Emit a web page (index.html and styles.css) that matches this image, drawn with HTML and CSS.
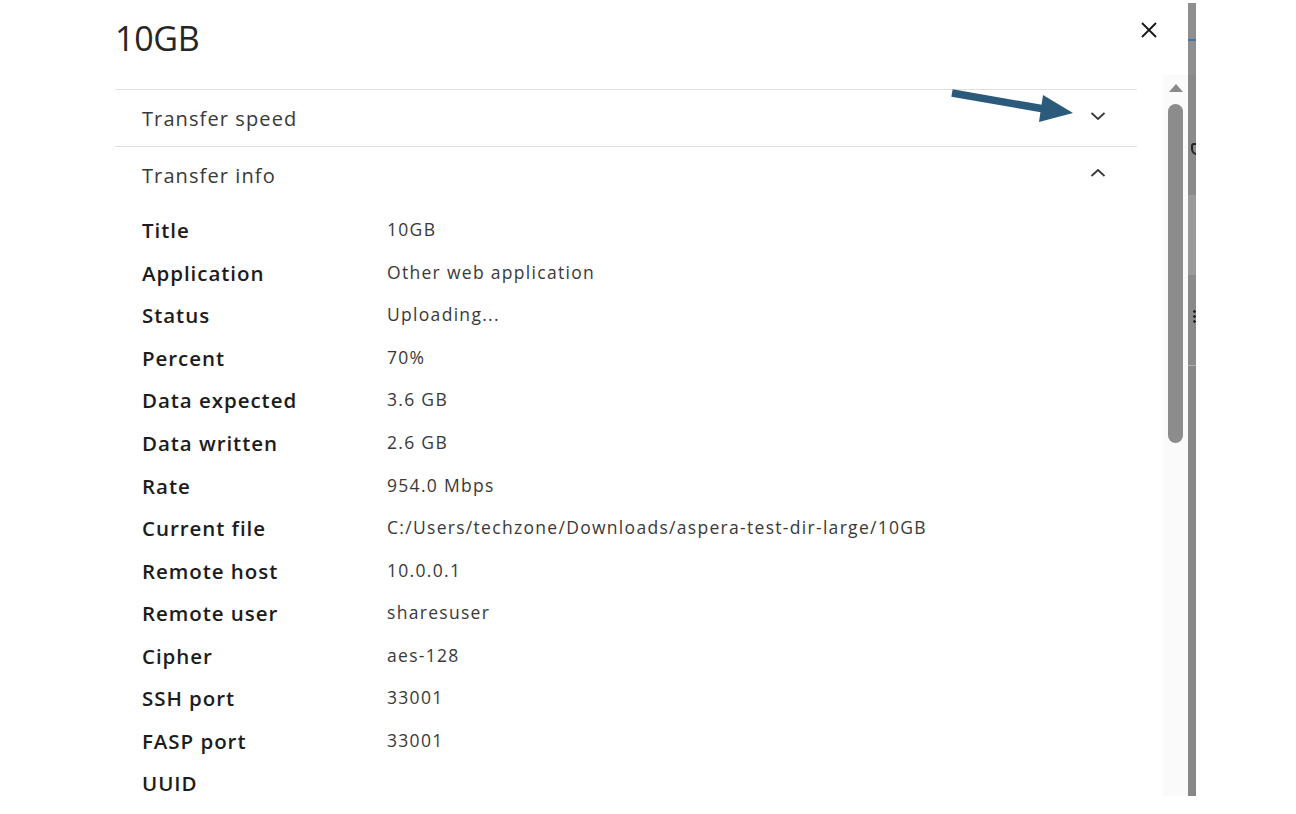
FILE: index.html
```html
<!DOCTYPE html>
<html lang="en">
<head>
<meta charset="utf-8">
<title>10GB transfer</title>
<link rel="stylesheet" href="styles.css">
</head>
<body>
<div class="page">
  <div class="modal">
    <header class="modal-header">
      <h1 class="modal-title">10GB</h1>
      <button class="close-btn" aria-label="Close">
        <svg width="18" height="18" viewBox="0 0 18 18"><path d="M2 2 L16 16 M16 2 L2 16" stroke="#161616" stroke-width="1.8" fill="none"/></svg>
      </button>
    </header>
    <div class="modal-body">
      <div class="content">
        <section class="acc-item">
          <div class="acc-head">
            <span class="acc-title">Transfer speed</span>
            <svg class="chev" width="16" height="10" viewBox="0 0 16 10"><path d="M1.5 2 L8 8 L14.5 2" stroke="#393939" stroke-width="1.8" fill="none"/></svg>
          </div>
        </section>
        <section class="acc-item open">
          <div class="acc-head">
            <span class="acc-title">Transfer info</span>
            <svg class="chev" width="16" height="10" viewBox="0 0 16 10"><path d="M1.5 8 L8 2 L14.5 8" stroke="#393939" stroke-width="1.8" fill="none"/></svg>
          </div>
          <dl class="info">
            <dt>Title</dt><dd>10GB</dd>
            <dt>Application</dt><dd>Other web application</dd>
            <dt>Status</dt><dd>Uploading...</dd>
            <dt>Percent</dt><dd>70%</dd>
            <dt>Data expected</dt><dd>3.6 GB</dd>
            <dt>Data written</dt><dd>2.6 GB</dd>
            <dt>Rate</dt><dd>954.0 Mbps</dd>
            <dt>Current file</dt><dd>C:/Users/techzone/Downloads/aspera-test-dir-large/10GB</dd>
            <dt>Remote host</dt><dd>10.0.0.1</dd>
            <dt>Remote user</dt><dd>sharesuser</dd>
            <dt>Cipher</dt><dd>aes-128</dd>
            <dt>SSH port</dt><dd>33001</dd>
            <dt>FASP port</dt><dd>33001</dd>
            <dt>UUID</dt><dd></dd>
          </dl>
        </section>
      </div>
      <div class="scrollbar">
        <div class="scroll-up"></div>
        <div class="scroll-thumb"></div>
      </div>
    </div>
  </div>
  <div class="bg-strip">
    <div class="strip-seg s1"></div>
    <div class="strip-blue"></div>
    <div class="strip-seg s2"></div>
    <div class="strip-seg s3"><span class="strip-mark"></span></div>
    <div class="strip-seg s4"></div>
    <div class="strip-seg s5"><span class="strip-dots"></span></div>
    <div class="strip-seg s6"></div>
  </div>
</div>
<svg class="annotation" width="140" height="50" viewBox="0 0 140 50">
  <path d="M2 9 L100 26" stroke="#2c5a7b" stroke-width="7.5" fill="none"/>
  <polygon points="93,11 123,29 89,38" fill="#2c5a7b"/>
</svg>
</body>
</html>
```

FILE: styles.css
```css
html, body {
  margin: 0;
  padding: 0;
  background: #ffffff;
}

body {
  font-family: "Open Sans", "Noto Sans", "Liberation Sans", sans-serif;
  color: #161616;
  position: relative;
  width: 1296px;
  height: 814px;
  overflow: hidden;
}

.page {
  display: flex;
  align-items: flex-start;
  height: 796px;
}

.modal {
  width: 1188px;
  height: 796px;
  background: #ffffff;
  display: flex;
  flex-direction: column;
}

.modal-header {
  height: 75px;
  display: flex;
  justify-content: space-between;
  align-items: flex-start;
  padding-left: 115px;
  padding-right: 30px;
}

.modal-title {
  margin: 18px 0 0 0;
  font-size: 34px;
  line-height: 40px;
  font-weight: 400;
  color: #262626;
  letter-spacing: -0.3px;
}

.close-btn {
  margin-top: 21px;
  width: 18px;
  height: 18px;
  padding: 0;
  border: 0;
  background: none;
  display: block;
}

.close-btn svg {
  display: block;
}

.modal-body {
  flex: 1;
  display: flex;
  min-height: 0;
}

.content {
  margin-left: 115px;
  width: 1022px;
  padding-top: 14px;
}

.acc-item {
  border-top: 1px solid #e0e0e0;
}

.acc-head {
  height: 56px;
  display: flex;
  align-items: center;
  justify-content: space-between;
  padding-left: 27px;
  padding-right: 31px;
}

.acc-title {
  font-size: 20px;
  color: #393939;
  letter-spacing: 1.1px;
}

.chev {
  display: block;
  position: relative;
  top: -2px;
}

.info {
  margin: 6px 0 0 0;
  padding-left: 27px;
  display: grid;
  grid-template-columns: 245px 1fr;
  grid-auto-rows: 42.55px;
  align-items: center;
}

.info dt {
  font-size: 20.5px;
  font-weight: 600;
  color: #1c1c1c;
  letter-spacing: 0.95px;
}

.info dd {
  margin: 0;
  font-size: 17.5px;
  color: #393939;
  position: relative;
  top: -1px;
  letter-spacing: 1.3px;
}

.scrollbar {
  margin-left: 26px;
  width: 25px;
  background: #fafafa;
  display: flex;
  flex-direction: column;
  align-items: center;
}

.scroll-up {
  margin-top: 9px;
  width: 0;
  height: 0;
  border-left: 7px solid transparent;
  border-right: 7px solid transparent;
  border-bottom: 8px solid #8a8a8a;
}

.scroll-thumb {
  margin-top: 12px;
  width: 15px;
  height: 339px;
  border-radius: 8px;
  background: #8c8c8c;
}

.bg-strip {
  margin-top: 3px;
  width: 8px;
  height: 793px;
  background: #878787;
  display: flex;
  flex-direction: column;
  overflow: hidden;
}

.strip-seg {
  position: relative;
}

.s1 { height: 36px; background: #8f8f8f; }
.strip-blue { height: 2px; background: #4a6fb0; }
.s2 { height: 34px; background: #8f8f8f; }
.s3 { height: 120px; background: #8a8a8a; }
.s4 { height: 80px; background: #9a9a9a; }
.s5 { height: 90px; background: #8a8a8a; border-bottom: 1px solid #b0b0b0; }
.s6 { flex: 1; background: #878787; }

.strip-mark {
  position: absolute;
  left: 3px;
  top: 68px;
  width: 9px;
  height: 8px;
  border: 2px solid #222;
  border-radius: 3px 3px 6px 6px;
}

.strip-dots {
  position: absolute;
  left: 5px;
  top: 34px;
  width: 3px;
  height: 14px;
  background: radial-gradient(circle, #222 1.2px, transparent 1.5px) 0 0 / 3px 5px repeat-y;
}

.annotation {
  position: absolute;
  left: 950px;
  top: 84px;
}
```
